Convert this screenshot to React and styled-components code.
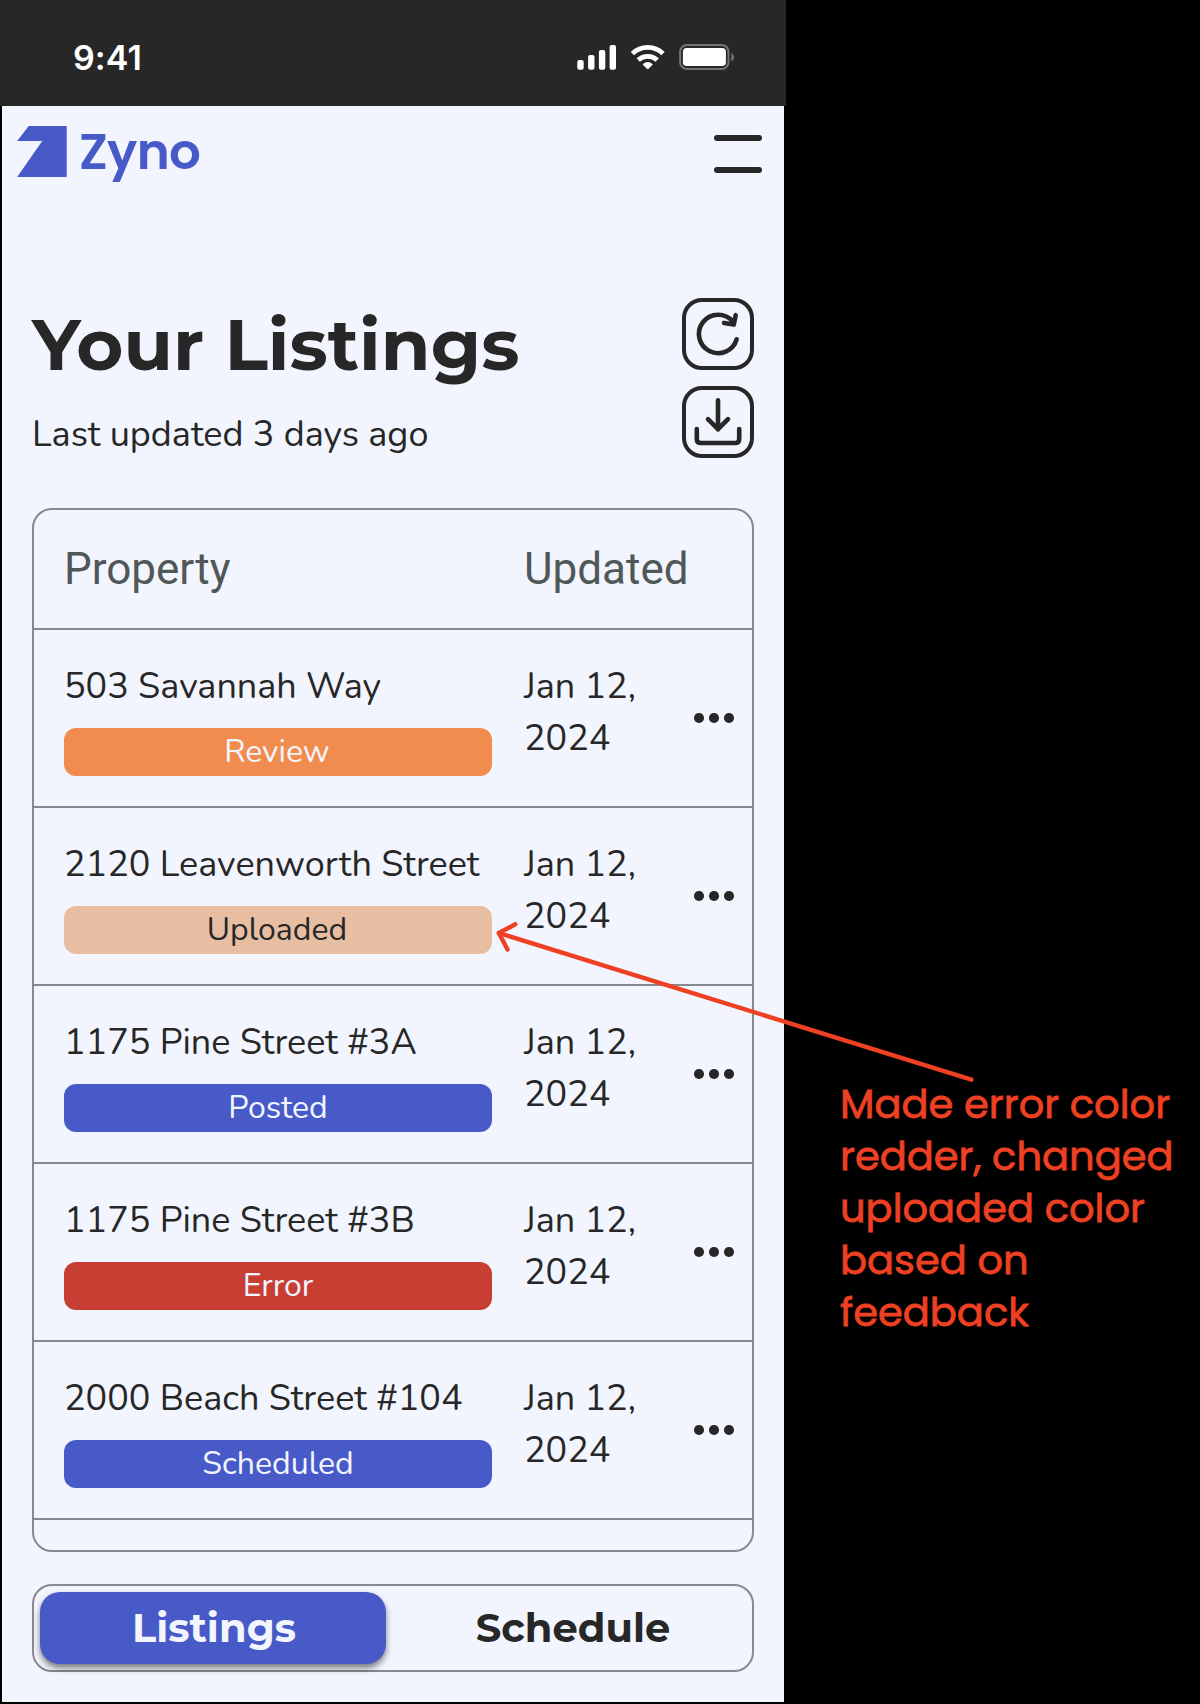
import React from "react";
import styled, { createGlobalStyle } from "styled-components";

const INK = "#272727";
const PAPER = "#f2f5fe";
const BLUE = "#475ac8";
const LINE = "#87898c";
const NOTE = "#ee4022";

const GlobalStyle = createGlobalStyle`
  * { box-sizing: border-box; }
  body { margin: 0; background: #000; }
  button { border: 0; padding: 0; background: none; color: inherit; font: inherit; }
`;

const Page = styled.main`
  position: relative;
  display: flex;
  width: 1200px;
  height: 1704px;
  background: #000;
  overflow: hidden;
`;

const Phone = styled.section`
  display: flex;
  flex-direction: column;
  width: 786px;
  height: 1702px;
`;

const StatusBar = styled.header`
  display: flex;
  justify-content: space-between;
  height: 106px;
  padding: 37px 51px 0 73px;
  background: ${INK};
  color: #fff;
`;

const Clock = styled.span`
  font: 600 34px/41px Inter, sans-serif;
  letter-spacing: 0.1px;
`;

const StatusIcons = styled.svg`
  width: 160px;
  height: 40px;
`;

const Screen = styled.div`
  display: flex;
  flex-direction: column;
  flex: 1;
  margin: 0 2px;
  background: ${PAPER};
  color: ${INK};
`;

const TopBar = styled.div`
  display: flex;
  justify-content: space-between;
  height: 192px;
  padding: 10px 22px 0 15px;
`;

const Brand = styled.div`
  display: flex;
  height: 71px;
  color: ${BLUE};
`;

const BrandMark = styled.svg`
  width: 50px;
  height: 51px;
  margin-top: 10px;
`;

const BrandName = styled.span`
  margin-left: 12px;
  font: 600 50px/71px Poppins, Inter, sans-serif;
  letter-spacing: -0.7px;
`;

const MenuButton = styled.button`
  display: flex;
  flex-direction: column;
  gap: 26px;
  width: 48px;
  margin-top: 19px;
`;

const MenuBar = styled.span`
  height: 6px;
  border-radius: 3px;
  background: ${INK};
`;

const TitleRow = styled.div`
  display: flex;
  justify-content: space-between;
  height: 210px;
  padding: 0 30px;
`;

const Title = styled.h1`
  margin: 2px 0 22px;
  font: 700 72px/88px Montserrat, Inter, sans-serif;
  white-space: nowrap;
`;

const Subtitle = styled.p`
  margin: 0;
  font: 400 36px/49px Nunito, Lato, sans-serif;
`;

const Actions = styled.div`
  display: flex;
  flex-direction: column;
  gap: 16px;
`;

const ActionButton = styled.button`
  width: 72px;
  height: 72px;
  border: 4px solid ${INK};
  border-radius: 20px;
`;

const ActionIcon = styled.svg`
  display: block;
  width: 64px;
  height: 64px;
  fill: none;
  stroke: ${INK};
  stroke-width: 4.6;
  stroke-linecap: round;
  stroke-linejoin: round;
`;

const Table = styled.section`
  height: 1044px;
  margin: 0 30px;
  border: 2px solid ${LINE};
  border-radius: 20px;
`;

const Columns = styled.div`
  display: grid;
  grid-template-columns: 428px 1fr 40px;
  column-gap: 32px;
  padding: 0 18px 0 30px;
  border-bottom: 2px solid ${LINE};
`;

const HeadRow = styled(Columns)`
  height: 120px;
  padding-top: 33px;
  font: 400 44px/52px Roboto, sans-serif;
  color: #505757;
`;

const Row = styled(Columns)`
  height: 178px;
`;

const Listing = styled.div`
  display: flex;
  flex-direction: column;
  gap: 17px;
  padding-top: 32px;
`;

const Address = styled.span`
  font: 400 36px/49px Nunito, Lato, sans-serif;
  white-space: nowrap;
`;

const Status = styled.span`
  height: 48px;
  padding-right: ${(p) => (p.$nudge ? 2 : 0)}px;
  border-radius: 12px;
  background: ${(p) => p.$bg};
  color: ${(p) => p.$fg || PAPER};
  font: 400 32px/47px Nunito, Lato, sans-serif;
  text-align: center;
`;

const Updated = styled.span`
  padding-top: 30.5px;
  font: 400 36px/52px Nunito, Lato, sans-serif;
`;

const MoreButton = styled.button`
  display: flex;
  align-items: center;
  justify-content: center;
  gap: 5.4px;
`;

const Dot = styled.span`
  width: 9.6px;
  height: 9.6px;
  border-radius: 50%;
  background: ${INK};
`;

const Tabs = styled.nav`
  display: flex;
  gap: 14px;
  height: 88px;
  margin: 32px 30px 0;
  padding: 6px;
  border: 2px solid ${LINE};
  border-radius: 20px;
`;

const Tab = styled.button`
  width: 346px;
  height: 72px;
  padding-left: ${(p) => (p.$active ? 2 : 0)}px;
  border-radius: 20px;
  background: ${(p) => (p.$active ? BLUE : "transparent")};
  box-shadow: ${(p) => (p.$active ? "0 4px 6px rgba(0, 0, 0, 0.5)" : "none")};
  color: ${(p) => (p.$active ? PAPER : INK)};
`;

const TabLabel = styled.span`
  display: block;
  height: 72px;
  font: 700 40px/71px Montserrat, Inter, sans-serif;
`;

const Note = styled.aside`
  width: 400px;
  padding: 1078px 0 0 54px;
  color: ${NOTE};
  font: 400 40px/52px Poppins, Inter, sans-serif;
  -webkit-text-stroke: 0.8px ${NOTE};
`;

const Arrow = styled.svg`
  position: absolute;
  left: 480px;
  top: 900px;
  width: 520px;
  height: 200px;
`;

const listings = [
  { address: "503 Savannah Way", status: "Review", bg: "#f18c4e", nudge: true },
  { address: "2120 Leavenworth Street", status: "Uploaded", bg: "#e8bea2", fg: INK, nudge: true },
  { address: "1175 Pine Street #3A", status: "Posted", bg: BLUE },
  { address: "1175 Pine Street #3B", status: "Error", bg: "#c73f33" },
  { address: "2000 Beach Street #104", status: "Scheduled", bg: BLUE },
];

export default function App() {
  return (
    <>
      <GlobalStyle />
      <Page>
        <Phone>
          <StatusBar>
            <Clock>9:41</Clock>
            <StatusIcons viewBox="575 37 160 40" fill="#fff">
              <rect x="577.3" y="60" width="6.4" height="9.8" rx="2" />
              <rect x="588.1" y="55" width="6.4" height="14.8" rx="2" />
              <rect x="598.9" y="50" width="6.4" height="19.8" rx="2" />
              <rect x="609.6" y="45" width="6.4" height="24.8" rx="2" />
              <g fill="none" stroke="#fff" strokeWidth="4.8">
                <path d="M632.4 53.6A22 22 0 0 1 663 53.6" />
                <path d="M638.2 60A14 14 0 0 1 657.2 60" />
              </g>
              <path
                d="M647.7 69.1L643.1 64.4A7.2 7.2 0 0 1 652.3 64.4Z"
                stroke="#fff"
                strokeWidth="1"
                strokeLinejoin="round"
              />
              <rect x="680.1" y="45" width="48.4" height="24" rx="6.8" fill="none" stroke="#747474" strokeWidth="2" />
              <rect x="682.9" y="48" width="43" height="18" rx="3.8" />
              <path d="M731.3 53.2C735 54.8 735 59.6 731.3 61.2Z" fill="#747474" />
            </StatusIcons>
          </StatusBar>
          <Screen>
            <TopBar>
              <Brand>
                <BrandMark viewBox="17.3 126 50 51" fill="currentColor">
                  <path d="M29 126H67V177H17.5L42.5 141H17.5Z" />
                </BrandMark>
                <BrandName>Zyno</BrandName>
              </Brand>
              <MenuButton aria-label="Menu">
                <MenuBar />
                <MenuBar />
              </MenuButton>
            </TopBar>
            <TitleRow>
              <div>
                <Title>Your Listings</Title>
                <Subtitle>Last updated 3 days ago</Subtitle>
              </div>
              <Actions>
                <ActionButton aria-label="Refresh">
                  <ActionIcon viewBox="686 302 64 64">
                    <path d="M736.6 339.3A19.2 19.2 0 1 1 732.8 321.6" />
                    <path d="M735.7 315.2L733.8 324.6L724 322.9" />
                  </ActionIcon>
                </ActionButton>
                <ActionButton aria-label="Download">
                  <ActionIcon viewBox="686 390 64 64">
                    <path d="M718 400.4V429.4M708 419.2L718 429.2L728 419.2" />
                    <path d="M696.8 429V439Q696.8 443 700.8 443H735.2Q739.2 443 739.2 439V429" />
                  </ActionIcon>
                </ActionButton>
              </Actions>
            </TitleRow>
            <Table>
              <HeadRow>
                <span>Property</span>
                <span>Updated</span>
              </HeadRow>
              {listings.map((item) => (
                <Row key={item.address}>
                  <Listing>
                    <Address>{item.address}</Address>
                    <Status $bg={item.bg} $fg={item.fg} $nudge={item.nudge}>
                      {item.status}
                    </Status>
                  </Listing>
                  <Updated>Jan 12, 2024</Updated>
                  <MoreButton aria-label="More">
                    <Dot />
                    <Dot />
                    <Dot />
                  </MoreButton>
                </Row>
              ))}
            </Table>
            <Tabs>
              <Tab $active>
                <TabLabel>Listings</TabLabel>
              </Tab>
              <Tab>
                <TabLabel>Schedule</TabLabel>
              </Tab>
            </Tabs>
          </Screen>
        </Phone>
        <Note>Made error color redder, changed uploaded color based on feedback</Note>
        <Arrow
          viewBox="480 900 520 200"
          fill="none"
          stroke={NOTE}
          strokeWidth="4.4"
          strokeLinecap="round"
          strokeLinejoin="round"
        >
          <path d="M498.9 933L971.5 1079.7" />
          <path d="M515.3 924.3L498.9 933L507.5 949.5" />
        </Arrow>
      </Page>
    </>
  );
}
